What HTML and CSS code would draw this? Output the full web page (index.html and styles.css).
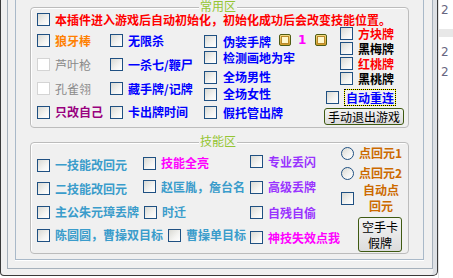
FILE: index.html
```html
<!DOCTYPE html>
<html>
<head>
<meta charset="utf-8">
<link rel="stylesheet" href="styles.css">
</head>
<body>
<div class="screen">
  <div class="win">
    <div class="frame-outer">
      <div class="frame-inner">
        <section class="group g1">
          <span class="gtitle">常用区</span>
          <div class="item row1"><span class="cb"></span><span class="t red">本插件进入游戏后自动初始化，初始化成功后会改变技能位置。</span></div>
          <div class="g1body">
            <div class="col c1">
              <div class="item"><span class="cb"></span><span class="t orange">狼牙棒</span></div>
              <div class="item"><span class="cb dis"></span><span class="t gray">芦叶枪</span></div>
              <div class="item"><span class="cb dis"></span><span class="t gray">孔雀翎</span></div>
              <div class="item"><span class="cb"></span><span class="t purple">只改自己</span></div>
            </div>
            <div class="col c2">
              <div class="item"><span class="cb"></span><span class="t blue">无限杀</span></div>
              <div class="item"><span class="cb"></span><span class="t blue">一杀七/鞭尸</span></div>
              <div class="item"><span class="cb"></span><span class="t blue">藏手牌/记牌</span></div>
              <div class="item"><span class="cb"></span><span class="t blue">卡出牌时间</span></div>
            </div>
            <div class="col c3">
              <div class="item"><span class="cb"></span><span class="t blue">伪装手牌</span><span class="gold g-a"></span><span class="one">1</span><span class="gold g-b"></span></div>
              <div class="item"><span class="cb"></span><span class="t blue">检测画地为牢</span></div>
              <div class="item"><span class="cb"></span><span class="t blue">全场男性</span></div>
              <div class="item"><span class="cb"></span><span class="t blue">全场女性</span></div>
              <div class="item"><span class="cb"></span><span class="t blue">假托管出牌</span></div>
            </div>
            <div class="col c4">
              <div class="item suit"><span class="cb"></span><span class="t red">方块牌</span></div>
              <div class="item suit"><span class="cb"></span><span class="t black">黑梅牌</span></div>
              <div class="item suit"><span class="cb"></span><span class="t red">红桃牌</span></div>
              <div class="item suit"><span class="cb"></span><span class="t black">黑桃牌</span></div>
              <div class="item auto"><span class="cb"></span><span class="t blue focus">自动重连</span></div>
              <div class="btn wide">手动退出游戏</div>
            </div>
          </div>
        </section>
        <section class="group g2">
          <span class="gtitle">技能区</span>
          <div class="g2body">
            <div class="left">
              <div class="lrow">
                <div class="item first"><span class="cb"></span><span class="t teal">一技能改回元</span></div>
                <div class="item up"><span class="cb"></span><span class="t magenta">技能全亮</span></div>
              </div>
              <div class="lrow">
                <div class="item first"><span class="cb"></span><span class="t teal">二技能改回元</span></div>
                <div class="item up"><span class="cb"></span><span class="t teal">赵匡胤，詹台名</span></div>
              </div>
              <div class="lrow">
                <div class="item first"><span class="cb"></span><span class="t teal">主公朱元璋丢牌</span></div>
                <div class="item"><span class="cb"></span><span class="t teal">时迁</span></div>
              </div>
              <div class="lrow">
                <div class="item first"><span class="cb"></span><span class="t teal">陈圆圆，曹操双目标</span></div>
                <div class="item"><span class="cb"></span><span class="t teal">曹操单目标</span></div>
              </div>
            </div>
            <div class="col c3b">
              <div class="item"><span class="cb"></span><span class="t violet">专业丢闪</span></div>
              <div class="item"><span class="cb"></span><span class="t violet">高级丢牌</span></div>
              <div class="item"><span class="cb"></span><span class="t violet">自残自偷</span></div>
              <div class="item"><span class="cb"></span><span class="t magenta">神技失效点我</span></div>
            </div>
            <div class="col c4b">
              <div class="item radio-item"><span class="rb"></span><span class="t brown">点回元1</span></div>
              <div class="item radio-item"><span class="rb"></span><span class="t brown">点回元2</span></div>
              <div class="item auto2"><span class="cb"></span><span class="t brown wrap">自动点回元</span></div>
              <div class="btn tall">空手卡<br>假牌</div>
            </div>
          </div>
        </section>
      </div>
    </div>
  </div>
  <div class="side">
    <div class="n n1">2</div>
    <div class="band"></div>
    <div class="n n2">2</div>
    <div class="n n3">2</div>
  </div>
</div>
</body>
</html>
```

FILE: styles.css
```css
* { box-sizing: border-box; margin: 0; padding: 0; }
html, body { width: 453px; height: 278px; overflow: hidden; }
body {
  background: #ffffff;
  font-family: "Noto Sans CJK SC", "Noto Sans", sans-serif;
  font-size: 12px;
  line-height: 16px;
}
.screen { display: flex; height: 278px; }
.win {
  width: 438px;
  height: 276px;
  background: #f0f0f0;
  border: 1px solid #3a3a3a;
  border-top: none;
  border-radius: 0 0 5px 4px;
  padding: 0 4px 0 6px;
  box-shadow: inset -4px 0 0 #dde0e4;
}
.frame-outer {
  height: 269px;
  border: 1px solid #a6b1bc;
  border-top: none;
  padding: 0 8px 8px 7px;
  background: #f0f0f0;
}
.frame-inner {
  height: 100%;
  border: 1px solid #a9b9c9;
  border-top: none;
  box-shadow: 0 1px 0 #ffffff;
  padding: 7px 13px 0 14px;
}
.group {
  position: relative;
  width: 379px;
  border: 1px solid #bcbcbc;
  border-radius: 4px;
  box-shadow: inset 1px 1px 0 #ffffff;
}
.g1 { height: 121px; }
.g2 { height: 112px; margin-top: 14px; }
.gtitle {
  position: absolute;
  left: 168px;
  top: -8px;
  line-height: 12px;
  padding: 0 1px;
  background: #f0f0f0;
  color: #95c532;
  font-size: 12px;
}

.item { display: flex; align-items: center; white-space: nowrap; }
.cb {
  flex: none;
  width: 13px;
  height: 13px;
  border: 1px solid #1f5082;
  background: linear-gradient(135deg, #d9d9d3 0%, #f4f4f2 60%, #ffffff 100%);
  margin-right: 5px;
}
.cb.dis { border-color: #d4d4d4; background: #ffffff; }
.rb {
  flex: none;
  width: 13px;
  height: 13px;
  border: 1px solid #1f5082;
  border-radius: 50%;
  background: linear-gradient(135deg, #d9d9d3 0%, #f4f4f2 60%, #ffffff 100%);
  margin-right: 5px;
}
.t { font-weight: 700; }
.red { color: #ff0000; }
.orange { color: #ff8000; }
.gray { color: #8a8a8a; font-weight: 400; }
.purple { color: #99007f; }
.blue { color: #0000ff; }
.black { color: #000000; }
.teal { color: #3a9ccb; }
.magenta { color: #ff00ff; }
.violet { color: #9933ff; }
.brown { color: #cc6a00; }

.row1 { height: 13px; margin: 5px 0 0 6px; }
.g1body { display: flex; margin-left: 6px; }
.c1 { width: 73px; padding-top: 3.1px; }
.c2 { width: 94px; padding-top: 3.1px; }
.c1 .item, .c2 .item { height: 23.8px; }
.c3 { width: 120px; padding-top: 7.5px; }
.c3 .item { height: 16px; }
.c3 .cb { margin-right: 6px; }
.c3 .item:nth-child(3) { margin-top: 3.5px; }
.c3 .item:nth-child(4) { margin-top: 1px; }
.c3 .item:nth-child(5) { margin-top: 2.7px; }
.gold {
  flex: none;
  width: 12px;
  height: 12px;
  border: 1px solid #4f5c14;
  border-radius: 2px;
  background: linear-gradient(#f6dc86, #d39a28);
  display: flex;
  align-items: center;
  justify-content: center;
  margin-top: -3px;
}
.gold::after {
  content: "";
  width: 6px;
  height: 6px;
  border: 1px solid #b98a2a;
  background: #fff7cc;
}
.g-a { margin-left: 8px; }
.one {
  margin-left: 7px;
  margin-right: 9px;
  margin-top: -3px;
  color: #ff00ff;
  font-family: "DejaVu Sans", sans-serif;
  font-weight: 700;
  font-size: 12px;
}
.c4 { flex: 1; }
.suit { height: 15px; margin-left: 16px; line-height: 15px; }
.auto { height: 17px; margin: 3px 0 0 2px; }
.focus {
  height: 17px;
  padding: 0 1px;
  border: 1px dotted #000000;
  background: #ffff00;
  box-shadow: inset 0 0 0 20px #f0f0f0;
  font-weight: 700;
  line-height: 15px;
}
.btn {
  display: flex;
  align-items: center;
  justify-content: center;
  text-align: center;
  border: 1px solid #3f5a12;
  border-radius: 3px;
  background: linear-gradient(#f4f4f4, #dcdcdc);
  color: #000000;
  font-size: 12px;
}
.btn.wide { width: 80px; height: 17px; margin-top: 2px; line-height: 15px; }

.g2body { display: flex; margin-left: 6px; }
.left { width: 213px; padding-top: 10.8px; }
.lrow { display: flex; height: 23.3px; }
.lrow .item { height: 23.3px; }
.first { min-width: 106px; padding-right: 5px; }
.up { margin-top: -2px; }
.c3b { width: 91px; padding-top: 6.3px; }
.c3b .item { height: 25.3px; }
.c4b { flex: 1; }
.radio-item { height: 20px; }
.auto2 { height: 32px; margin-top: -1px; }
.wrap {
  white-space: normal;
  width: 44px;
  text-align: center;
  line-height: 16px;
}
.btn.tall {
  width: 44px;
  height: 35px;
  margin: 3px 0 0 17px;
  line-height: 16px;
}

.side { flex: 1; background: #ffffff; border-left: 1px solid #e2e2e2; }
.n {
  padding-left: 2px;
  height: 16px;
  line-height: 16px;
  color: #666680;
  font-family: "DejaVu Sans", sans-serif;
  font-size: 12px;
}
.n1 { margin-top: 2px; }
.band { height: 8px; margin-top: 11px; background: #e8e8e8; }
.n2 { margin-top: 7px; }
.n3 { margin-top: 4px; }
```
